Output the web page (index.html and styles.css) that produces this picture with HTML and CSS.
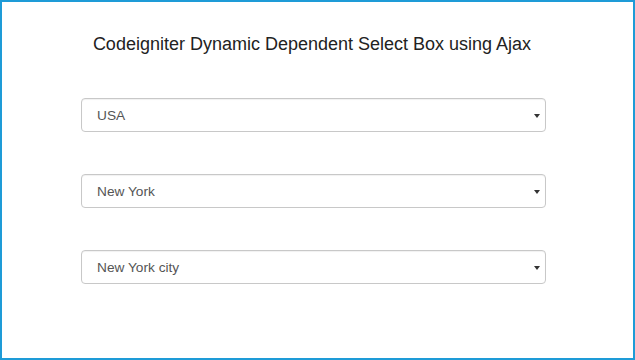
FILE: index.html
```html
<!DOCTYPE html>
<html>
<head>
<meta charset="utf-8">
<link rel="stylesheet" href="styles.css">
</head>
<body>
<div class="frame">
  <h3 class="title">Codeigniter Dynamic Dependent Select Box using Ajax</h3>
  <div class="fields">
    <div class="select"><span class="value">USA</span><span class="caret"></span></div>
    <div class="select"><span class="value">New York</span><span class="caret"></span></div>
    <div class="select"><span class="value">New York city</span><span class="caret"></span></div>
  </div>
</div>
</body>
</html>
```
FILE: styles.css
```css
html, body {
  margin: 0;
  padding: 0;
  background: #fff;
}
.frame {
  box-sizing: border-box;
  width: 635px;
  height: 360px;
  border: 2px solid #1e9bd7;
  padding-top: 32px;
  font-family: "Liberation Sans", Arial, sans-serif;
}
.title {
  margin: 0;
  font-size: 18px;
  line-height: 20px;
  font-weight: normal;
  color: #222;
  text-align: center;
  padding-right: 11px;
}
.fields {
  display: flex;
  flex-direction: column;
  gap: 42px;
  margin-top: 44px;
  margin-left: 79px;
  width: 465px;
}
.select {
  box-sizing: border-box;
  height: 34px;
  border: 1px solid #c8c8c8;
  border-radius: 4px;
  box-shadow: inset 0 1px 1px rgba(0,0,0,0.06);
  display: flex;
  align-items: center;
  justify-content: space-between;
  padding: 0 5px 0 15px;
  font-size: 13.7px;
  color: #555;
}
.caret {
  width: 0;
  height: 0;
  border-left: 3px solid transparent;
  border-right: 3px solid transparent;
  border-top: 4px solid #333;
  margin-top: 1px;
}
```
